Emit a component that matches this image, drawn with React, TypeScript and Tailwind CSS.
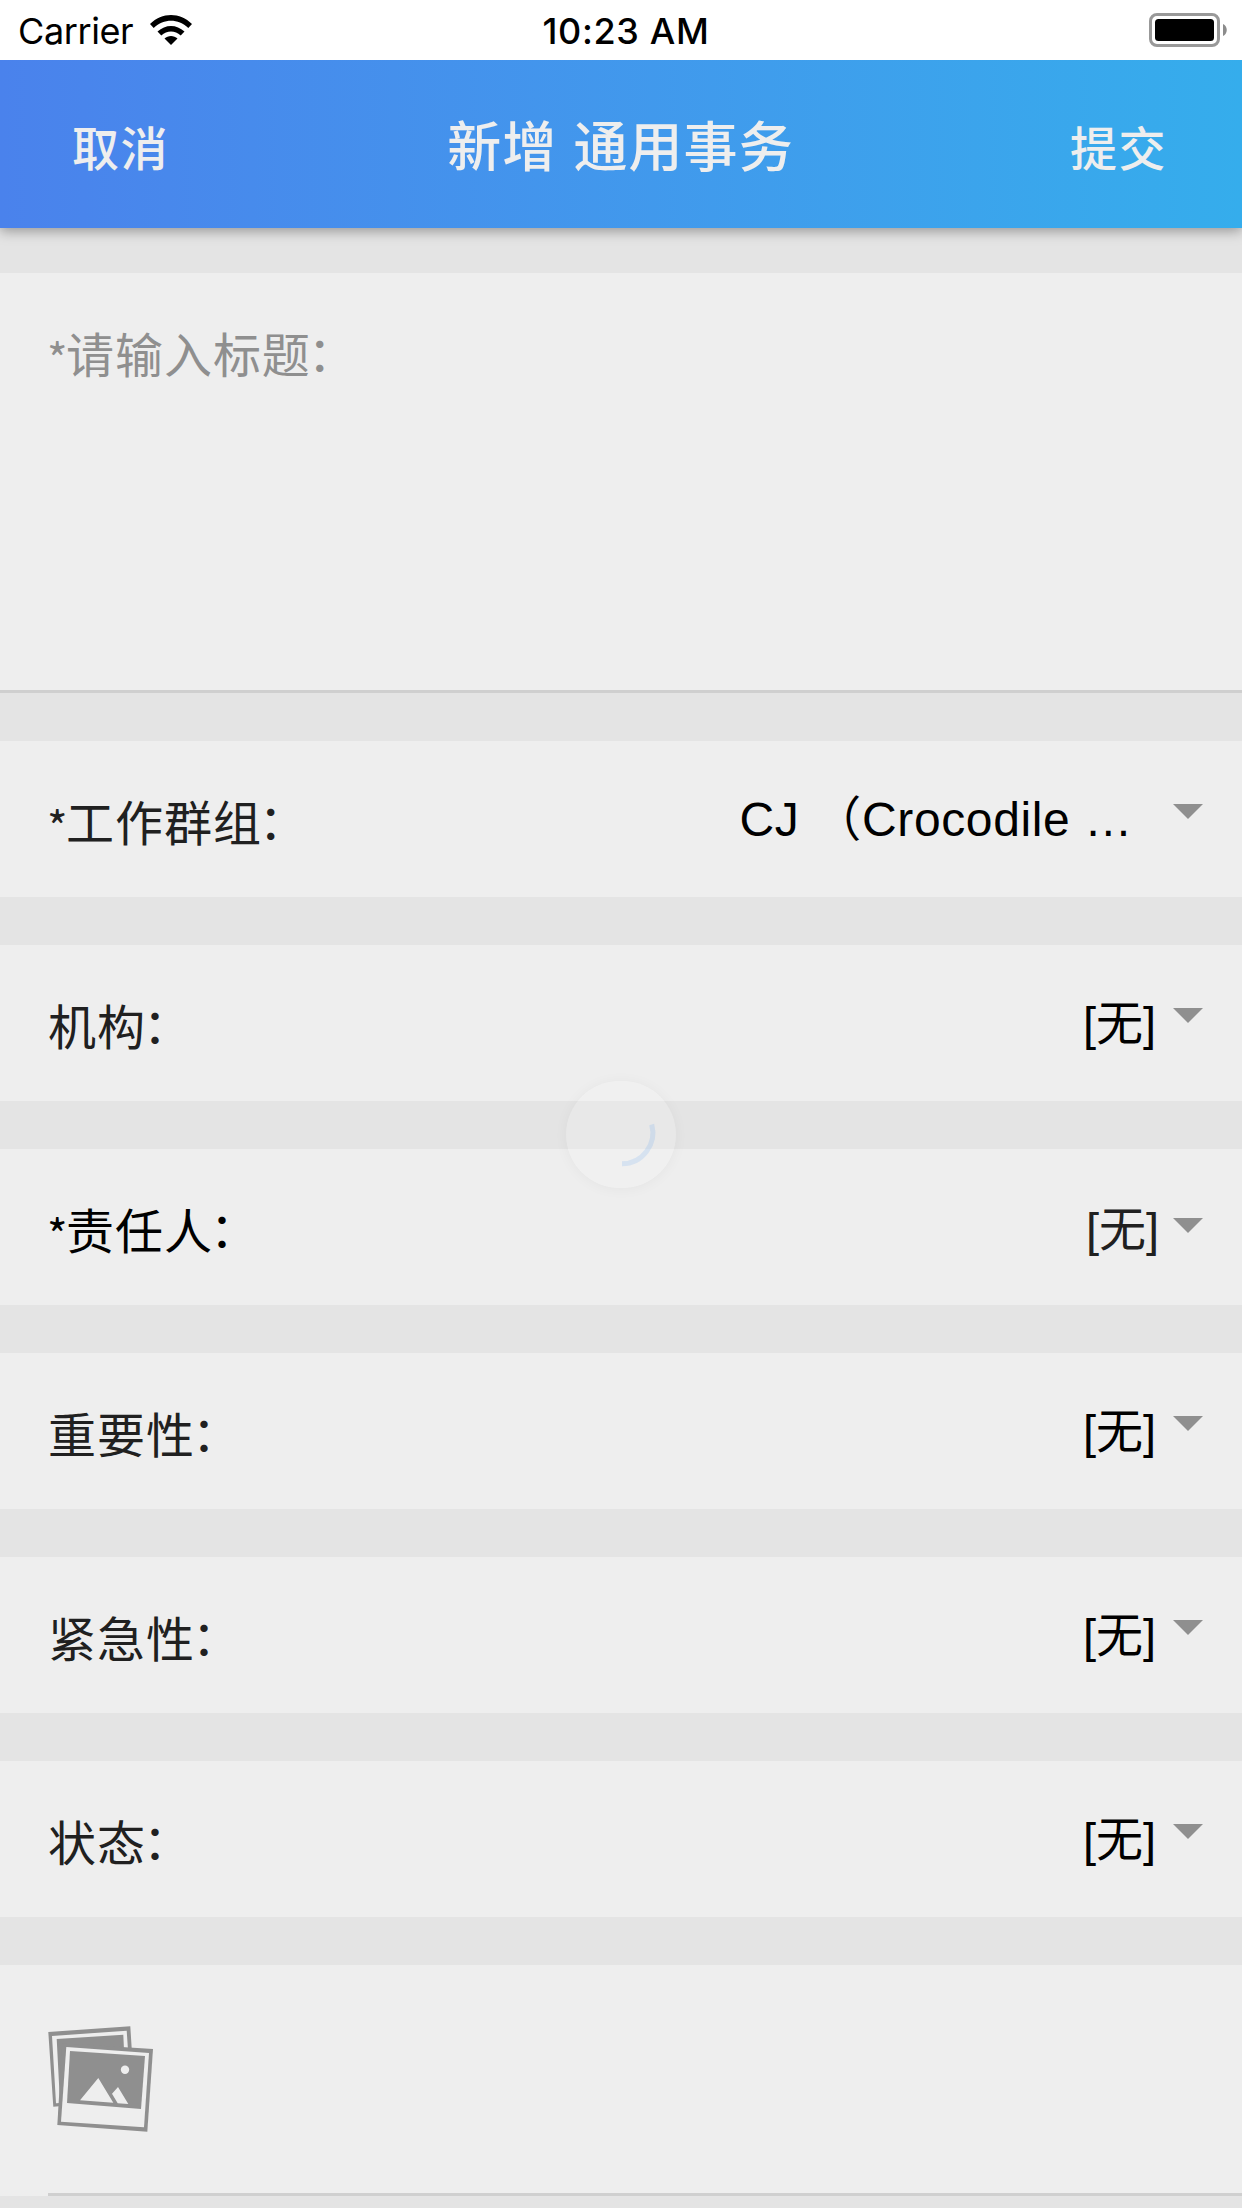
const base = "font-['Liberation_Sans','Noto_Sans_CJK_SC',sans-serif]";

function Caret({ className }: { className: string }) {
  return (
    <svg className={`h-[15px] w-[30px] shrink-0 ${className}`} viewBox="0 0 30 15">
      <path d="M0 0H30L15 15Z" fill="#8f8f8f" />
    </svg>
  );
}

type Field = {
  label: string;
  value: string;
  required?: boolean;
  lead?: boolean;
};

const fields: Field[] = [
  { label: "工作群组", value: "CJ （Crocodile …", required: true },
  { label: "机构", value: "[无]" },
  { label: "责任人", value: "[无]", required: true, lead: true },
  { label: "重要性", value: "[无]" },
  { label: "紧急性", value: "[无]" },
  { label: "状态", value: "[无]" },
];

function Label({ text, required, className }: { text: string; required?: boolean; className: string }) {
  return (
    <span className={`flex text-[48px] leading-[72px] tracking-[0.02em] ${className}`}>
      {required && (
        <span className="w-[18px] shrink-0 -indent-[1px] font-['Noto_Sans_CJK_SC',sans-serif] text-[44px] tracking-normal">
          *
        </span>
      )}
      <span className="-mr-[3px]">{text}</span>
      <span className="-mt-[4px] font-['Noto_Sans_CJK_TC',sans-serif] [font-feature-settings:'halt']">：</span>
    </span>
  );
}

function Row({ field }: { field: Field }) {
  const long = field.value.length > 3;
  return (
    <div className="flex h-[156px] items-start bg-[#eeeeee] pr-[39px] pl-12">
      <Label
        text={field.label}
        required={field.required}
        className={field.lead ? "mt-[48px] text-black" : "mt-[48px] text-[#202020]"}
      />
      <span
        className={`ml-auto leading-[72px] ${
          long
            ? "mt-[43px] mr-[40px] text-[48px] tracking-[0.63px] text-black"
            : field.lead
              ? "mt-[45px] mr-[14px] text-[47px] text-[#202020]"
              : "mt-[43px] mr-[17px] text-[47px] text-black"
        }`}
      >
        {field.value}
      </span>
      <Caret className={field.lead ? "mt-[69px]" : "mt-[63px]"} />
    </div>
  );
}

function WifiIcon() {
  return (
    <svg className="h-[30px] w-[42px] shrink-0" viewBox="0 0 42 30">
      <path d="M0 9C12-3 30-3 42 9L38.3 13C28 3.3 14 3.3 3.7 13Z" />
      <path d="M7.5 16.5C15.5 9 26.5 9 34.5 16.5L30.7 20.5C25 15.1 17 15.1 11.3 20.5Z" />
      <path d="M14.5 23.5C18 20 24 20 27.5 23.5L21 30Z" />
    </svg>
  );
}

function BatteryIcon() {
  return (
    <svg className="h-[34px] w-[78px]" viewBox="0 0 78 34">
      <rect x="1.5" y="1.5" width="68" height="31" rx="6.5" fill="none" stroke="#999" strokeWidth="3" />
      <rect x="6" y="6" width="59" height="22" rx="3.5" fill="#000" />
      <path d="M74 11C79 13 79 21 74 23Z" fill="#8c8c8c" />
    </svg>
  );
}

function PhotosIcon() {
  return (
    <svg className="h-[106px] w-[106px]" viewBox="0 0 106 106">
      <path d="M.3 6L82.3.3L83.8 24H20L11 80.3L5.3 80.7Z" fill="#8f8f8f" />
      <path d="M4 10L78.7 4.7L80 24H18L11.5 77L8 77.3Z" fill="#eeeeee" />
      <path d="M8.7 13L75.3 8.7L76 24H16L12 77Z" fill="#8f8f8f" />
      <path d="M14.3 17.3L105 23L99.3 105.7L9.3 99Z" fill="#8f8f8f" />
      <path d="M18.3 21L101 27L96 101.3L13 95.7Z" fill="#eeeeee" />
      <path d="M22 25L97 30L93 83L19 77Z" fill="#8f8f8f" />
      <circle cx="77" cy="43.7" r="4.2" fill="#eeeeee" />
      <path d="M50.3 52L65.3 76.7L32 74.3Z M70 61L80.3 78L69.7 77.3L64 67.7Z" fill="#eeeeee" />
    </svg>
  );
}

function Spinner() {
  return (
    <div className="absolute top-[1081px] left-[566px] h-[107px] w-[110px] rounded-full bg-white/15 shadow-[0_1px_14px_rgba(0,0,0,0.045)]">
      <svg className="h-full w-full" viewBox="0 0 110 107">
        <path d="M85.7 43.5A31 31 0 0 1 56 82.7" fill="none" stroke="#3c8ff0" strokeOpacity="0.14" strokeWidth="5" />
      </svg>
    </div>
  );
}

export default function App() {
  return (
    <div className={`relative flex h-[2208px] w-[1242px] flex-col overflow-hidden bg-[#e4e4e4] ${base}`}>
      <div className="z-20 grid h-[60px] shrink-0 grid-cols-3 items-center bg-white pr-[15px] pl-[18px] font-['Inter',sans-serif] text-black">
        <div className="flex items-center gap-[17px]">
          <span className="pt-[2px] text-[36px] leading-[58px] tracking-[-0.4px]">Carrier</span>
          <WifiIcon />
        </div>
        <span className="pt-[2px] pl-[7px] text-center text-[36px] leading-[58px] font-medium tracking-[0.65px] whitespace-nowrap">
          10:23 AM
        </span>
        <div className="flex justify-end">
          <BatteryIcon />
        </div>
      </div>

      <header className="z-10 flex h-[168px] shrink-0 items-center justify-between bg-linear-to-r from-[#4a82ec] to-[#35adec] pr-[75px] pl-[72px] font-medium text-[#eeeeee] shadow-[0_3px_12px_rgba(0,0,0,0.35)]">
        <span className="mt-[11px] text-[47px] leading-[72px] tracking-[1.5px]">取消</span>
        <span className="mt-[7px] ml-[2px] text-[54px] leading-[80px] tracking-[0.02em]">新增 通用事务</span>
        <span className="mt-[11px] text-[47px] leading-[72px] tracking-[1.5px]">提交</span>
      </header>

      <main className="flex flex-col gap-12 pt-[45px]">
        <div className="h-[420px] border-b-[3px] border-[#cfcfcf] bg-[#eeeeee] pl-12">
          <Label text="请输入标题" required className="pt-[48px] text-[#8f8f8f]" />
        </div>
        {fields.map((field) => (
          <Row key={field.label} field={field} />
        ))}
        <div className="h-[231px] bg-[#eeeeee] pl-12">
          <div className="flex h-full items-start border-b-[3px] border-[#cfcfcf] pt-[61px]">
            <PhotosIcon />
          </div>
        </div>
      </main>

      <Spinner />
    </div>
  );
}
